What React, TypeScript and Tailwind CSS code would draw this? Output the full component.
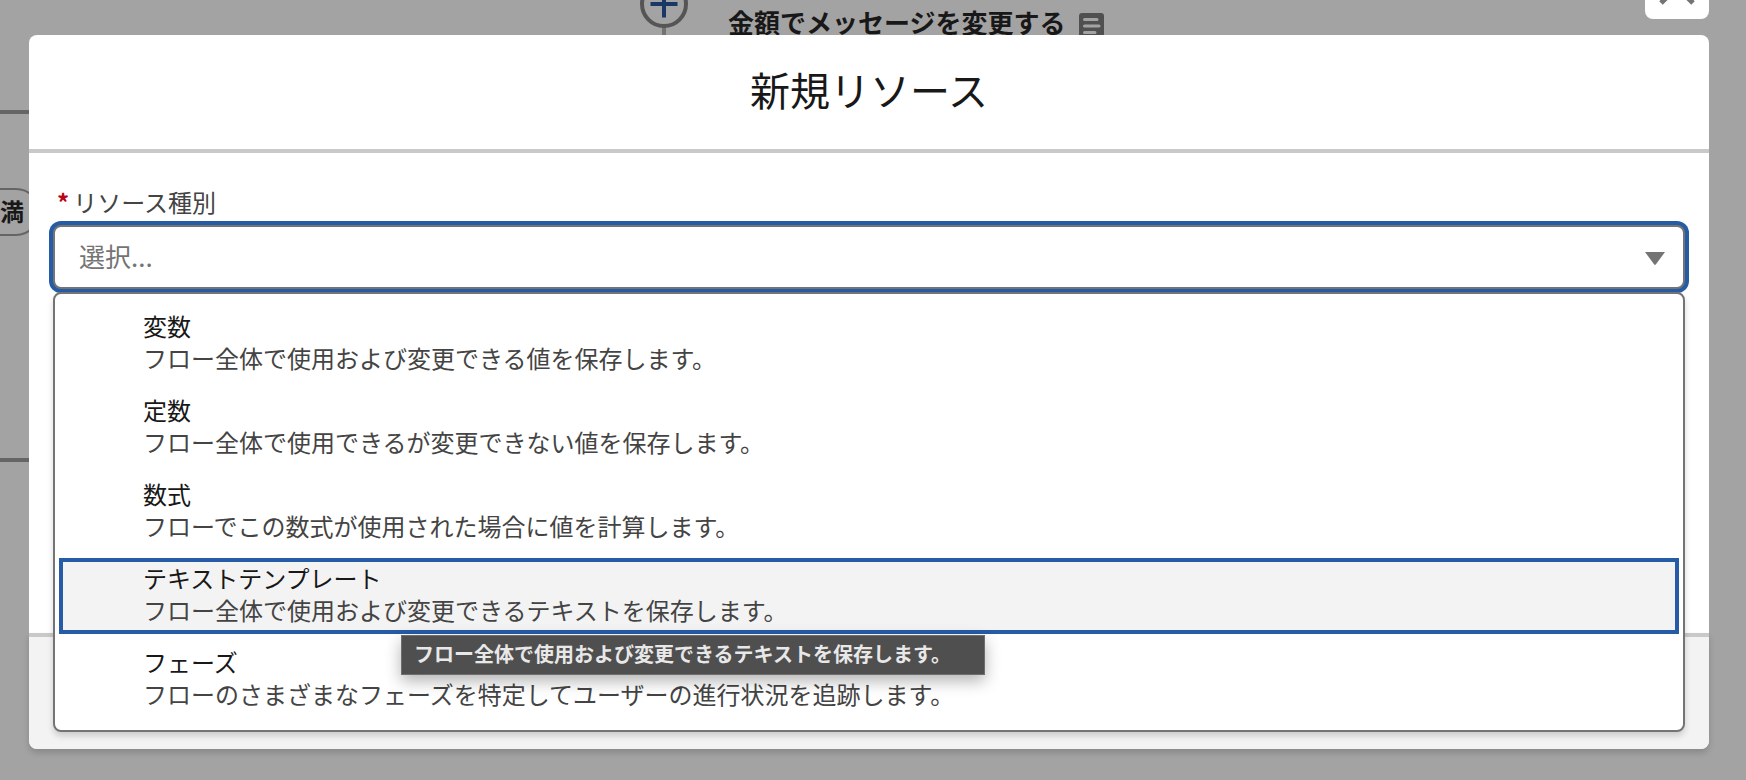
import React, { useState } from "react";

const options = [
  { title: "変数", description: "フロー全体で使用および変更できる値を保存します。" },
  { title: "定数", description: "フロー全体で使用できるが変更できない値を保存します。" },
  { title: "数式", description: "フローでこの数式が使用された場合に値を計算します。" },
  { title: "テキストテンプレート", description: "フロー全体で使用および変更できるテキストを保存します。" },
  { title: "フェーズ", description: "フローのさまざまなフェーズを特定してユーザーの進行状況を追跡します。" },
];

function FlowCanvas() {
  return (
    <div className="absolute inset-0 overflow-hidden text-[#181818]" aria-hidden="true">
      {/* connectors */}
      <div className="absolute left-0 top-[110px] h-1 w-16 bg-[#656565]" />
      <div className="absolute left-0 top-[458px] h-1 w-16 bg-[#656565]" />
      <div className="absolute left-[662px] top-6 h-10 w-1 bg-[#737373]" />

      {/* add element button */}
      <svg className="absolute left-[640px] -top-5" width="48" height="48" viewBox="0 0 48 48">
        <circle cx="24" cy="24" r="22" fill="#a3a3a3" stroke="#555555" strokeWidth="4" />
        <path d="M24 10.500V37.500M10.500 24H37.500" stroke="#1a3765" strokeWidth="4" />
      </svg>

      {/* element label */}
      <div className="absolute left-[728px] top-0.5 flex items-center gap-3.5 text-[26px] leading-10 font-bold whitespace-nowrap">
        <span>金額でメッセージを変更する</span>
        <svg width="26" height="26" viewBox="0 0 26 26" className="mt-2">
          <rect width="25" height="26" rx="3" fill="#505050" />
          <path d="M5.500 6.500H18M5.500 13H20M5.500 19.500H16" stroke="#a3a3a3" strokeWidth="3" strokeLinecap="round" />
        </svg>
      </div>

      {/* outcome label */}
      <div className="absolute -left-20 top-[188px] flex h-12 w-[120px] items-center justify-end rounded-3xl border-2 border-[#656565] pr-3.5 pb-0.5 text-[24px] font-bold">
        満
      </div>
    </div>
  );
}

export default function App() {
  const [active, setActive] = useState(3);
  const [query, setQuery] = useState("");

  return (
    <div className="relative min-h-screen overflow-hidden bg-[#a3a3a3] font-['Noto_Sans_CJK_JP',sans-serif]">
      <FlowCanvas />

      <div className="relative flex flex-col pr-[37px] pl-[29px]">
        <button
          type="button"
          aria-label="閉じる"
          className="-mt-[45px] flex size-16 items-center justify-center self-end rounded-lg bg-white"
        >
          <svg width="36" height="36" viewBox="0 0 36 36">
            <path d="M2 2L34 34M34 2L2 34" stroke="#747474" strokeWidth="5" />
          </svg>
        </button>

        <section
          role="dialog"
          aria-modal="true"
          aria-labelledby="dialog-title"
          className="mt-4 flex flex-col rounded-lg bg-white"
        >
          <header className="flex h-[118px] items-center justify-center border-b-4 border-[#c9c9c9] pb-1.5">
            <h2 id="dialog-title" className="text-[40px] leading-[50px] text-[#181818]">
              新規リソース
            </h2>
          </header>

          <div className="min-h-[480px] px-6 pt-8">
            <label
              htmlFor="resource-type"
              className="flex h-10 items-center gap-1 pb-1.5 pl-1 text-[24px] leading-8 text-[#444444]"
            >
              <abbr className="font-bold text-[#ba0517] no-underline">*</abbr>
              リソース種別
            </label>

            <div className="relative">
              <input
                id="resource-type"
                type="text"
                role="combobox"
                aria-expanded="true"
                aria-controls="resource-options"
                autoComplete="off"
                placeholder="選択..."
                value={query}
                onChange={(e) => setQuery(e.target.value)}
                className="block h-16 w-full rounded-lg border-2 border-[#747474] bg-white px-6 pb-1 text-[26px] text-[#181818] outline-none ring-4 ring-[#265ba6] placeholder:text-[#747474]"
              />
              <svg className="absolute top-[27px] right-5" width="20" height="13" viewBox="0 0 20 13">
                <path d="M0 0H20L10.800 12.400Q10 13 9.200 12.400Z" fill="#747474" />
              </svg>

              <ul
                id="resource-options"
                role="listbox"
                className="absolute inset-x-0 top-[67px] flex flex-col gap-2 rounded-lg border-2 border-[#747474] bg-white px-1 py-3 shadow-[0_4px_6px_rgba(0,0,0,0.16)]"
              >
                {options.map((option, i) => (
                  <li
                    key={option.title}
                    role="option"
                    aria-selected={i === active}
                    onMouseEnter={() => setActive(i)}
                    className={
                      i === active
                        ? "relative border-4 border-[#265ba6] bg-[#f3f3f3] pb-1 pl-20 text-[24px] leading-8"
                        : "relative border-4 border-transparent pb-1 pl-20 text-[24px] leading-8"
                    }
                  >
                    <div className="text-[#181818]">{option.title}</div>
                    <div className="text-[#444444]">{option.description}</div>
                    {i === active && (
                      <div
                        role="tooltip"
                        className="absolute top-[73px] left-[338px] z-10 flex h-10 w-[584px] items-center border border-[#6e6e6e] bg-[#4f4f4f] pb-0.5 pl-3 text-[20px] font-bold whitespace-nowrap text-[#e8e8e8] shadow-[0_6px_16px_rgba(0,0,0,0.3)]"
                      >
                        {option.description}
                      </div>
                    )}
                  </li>
                ))}
              </ul>
            </div>
          </div>

          <footer className="h-[116px] rounded-b-lg border-t-4 border-[#c9c9c9] bg-[#f3f3f3] shadow-[0_4px_6px_rgba(0,0,0,0.16)]" />
        </section>
      </div>
    </div>
  );
}
